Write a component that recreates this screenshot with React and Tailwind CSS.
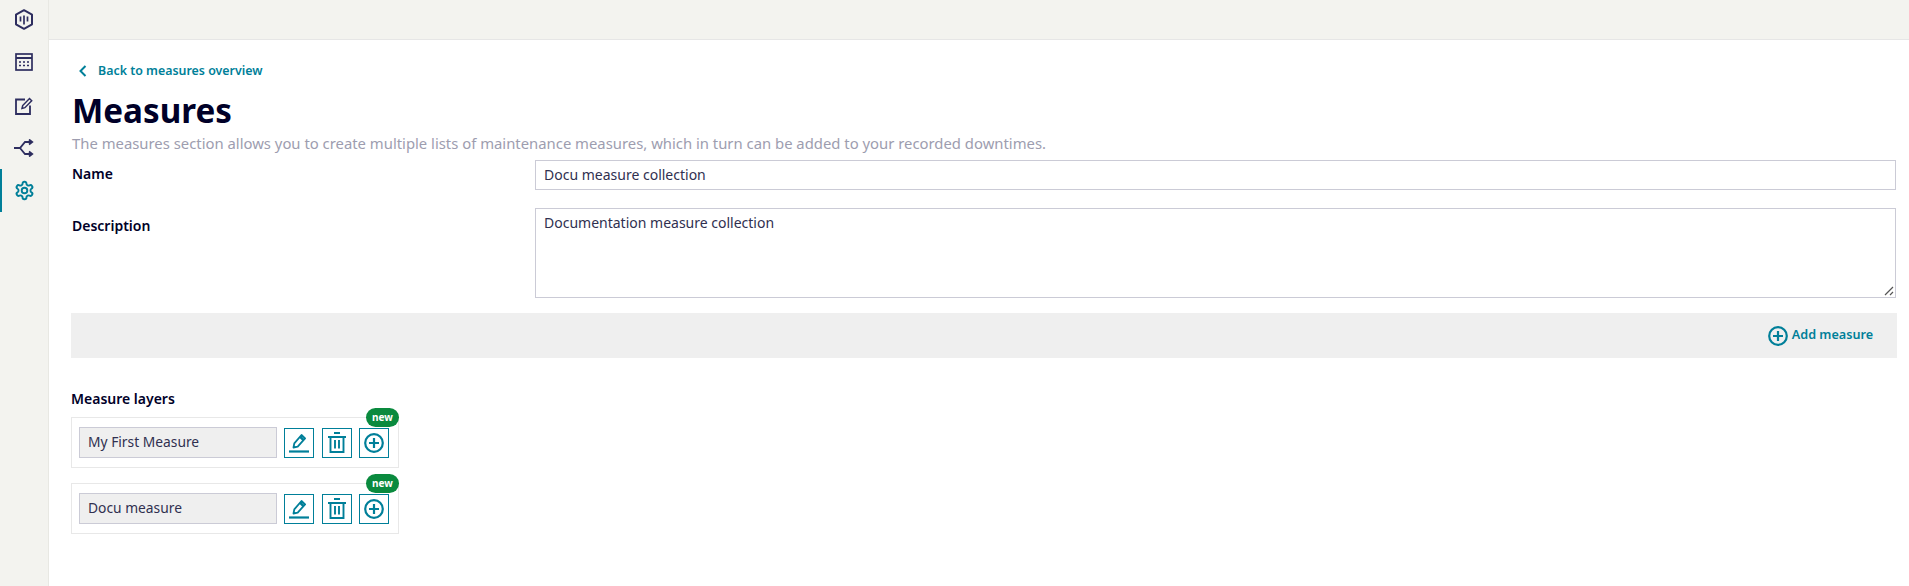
import React from "react";

const F = { fontFamily: '"Noto Sans", "Open Sans", sans-serif' };

function Hex() {
  return (
    <svg width="18" height="21" viewBox="0 0 18 21" fill="none" stroke="#2d2d5f" strokeWidth="2">
      <path d="M9 1.2 17 5.7v9.6l-8 4.5-8-4.5V5.7z" strokeLinejoin="round" />
      <path d="M5.5 7.5v5M9 6.5v9M12.5 7.5v5" strokeWidth="1.7" />
    </svg>
  );
}
function Cal() {
  return (
    <svg width="18" height="18" viewBox="0 0 18 18" fill="none" stroke="#2d2d5f" strokeWidth="1.7">
      <rect x="1" y="1" width="16" height="16" />
      <path d="M1 5h16" strokeWidth="2" />
      <path d="M4 9h2M8 9h2M12 9h2M4 12.5h2M8 12.5h2M12 12.5h2" strokeWidth="1.6" />
    </svg>
  );
}
function Note() {
  return (
    <svg width="19" height="19" viewBox="0 0 19 19" fill="none" stroke="#2d2d5f" strokeWidth="1.8">
      <path d="M10 3.5H1v14.5h14V9.5" />
      <path d="M7 12.5l.7-3 6.8-7 2.2 2.2-6.8 7z" strokeWidth="1.5" />
    </svg>
  );
}
function Branch() {
  return (
    <svg width="20" height="18" viewBox="0 0 20 18" fill="none" stroke="#2d2d5f" strokeWidth="1.8">
      <path d="M0 9h6l5-6h7M6 9l5 6h7" />
      <path d="M15 0.5 18.2 3 15 5.5M15 12.5l3.2 2.5-3.2 2.5" />
    </svg>
  );
}
function Gear() {
  return (
    <svg width="21" height="21" viewBox="0 0 24 24" fill="none" stroke="#007f99" strokeWidth="2.2" strokeLinejoin="round">
      <path d="M12.22 2h-.44a2 2 0 0 0-2 2v.18a2 2 0 0 1-1 1.73l-.43.25a2 2 0 0 1-2 0l-.15-.08a2 2 0 0 0-2.73.73l-.22.38a2 2 0 0 0 .73 2.73l.15.1a2 2 0 0 1 1 1.72v.51a2 2 0 0 1-1 1.74l-.15.09a2 2 0 0 0-.73 2.73l.22.38a2 2 0 0 0 2.73.73l.15-.08a2 2 0 0 1 2 0l.43.25a2 2 0 0 1 1 1.73V20a2 2 0 0 0 2 2h.44a2 2 0 0 0 2-2v-.18a2 2 0 0 1 1-1.73l.43-.25a2 2 0 0 1 2 0l.15.08a2 2 0 0 0 2.73-.73l.22-.39a2 2 0 0 0-.73-2.73l-.15-.08a2 2 0 0 1-1-1.74v-.5a2 2 0 0 1 1-1.74l.15-.09a2 2 0 0 0 .73-2.73l-.22-.38a2 2 0 0 0-2.73-.73l-.15.08a2 2 0 0 1-2 0l-.43-.25a2 2 0 0 1-1-1.73V4a2 2 0 0 0-2-2z" />
      <circle cx="12" cy="12" r="3.2" />
    </svg>
  );
}
function Plus({ size = 20 }) {
  return (
    <svg width={size} height={size} viewBox="0 0 20 20" fill="none" stroke="#007f99" strokeWidth="2.2">
      <circle cx="10" cy="10" r="8.8" />
      <path d="M10 5v10M5 10h10" />
    </svg>
  );
}
function Pen() {
  return (
    <svg width="20" height="21" viewBox="0 0 20 21" fill="none" stroke="#007f99" strokeWidth="1.8">
      <path d="M4.5 15.5l.8-4.2L12.5 3l3.6 3.4-7.4 8.2z" strokeLinejoin="round" />
      <path d="M11 4.5l3.6 3.6" strokeWidth="2.6" />
      <path d="M0 19.5h20" strokeWidth="2.2" />
    </svg>
  );
}
function Trash() {
  return (
    <svg width="18" height="21" viewBox="0 0 18 21" fill="none" stroke="#007f99" strokeWidth="1.9">
      <path d="M0 5h18M6 1h6" />
      <path d="M2.5 5v15h13V5" />
      <path d="M7 8v8.5M11 8v8.5" />
    </svg>
  );
}

function IconBtn({ children, className = "" }) {
  return (
    <div className={"w-[30px] h-[30px] border border-[#007f99] flex items-center justify-center shrink-0 " + className}>
      {children}
    </div>
  );
}

function Layer({ name }) {
  return (
    <div className="relative w-[328px] h-[51px] border border-[#e8e8e8] pl-[7px] flex items-center">
      <div className="w-[198px] h-[31px] bg-[#efefef] border border-[#cbcbd6] pl-[8px] flex items-center text-[13.8px] text-[#303050] mr-[7px]">
        {name}
      </div>
      <IconBtn className="mr-[8px]"><Pen /></IconBtn>
      <IconBtn className="mr-[7px]"><Trash /></IconBtn>
      <IconBtn><Plus size={20} /></IconBtn>
      <div className="absolute right-[-1px] top-[-10px] w-[33px] h-[19px] rounded-full bg-[#0a8a3e] text-white text-[10px] font-bold flex items-center justify-center">
        new
      </div>
    </div>
  );
}

export default function App() {
  return (
    <div style={F} className="flex h-[586px] w-[1909px] overflow-hidden bg-white text-[#000028]">
      <aside className="w-[49px] shrink-0 bg-[#f3f3ef] border-r border-[#e8e8e3] flex flex-col">
        <div className="h-[38px] flex items-center justify-center pr-[1px]"><Hex /></div>
        <div className="h-[44px] mt-[2px] flex items-center justify-center"><Cal /></div>
        <div className="h-[43px] flex items-center justify-center"><Note /></div>
        <div className="h-[42px] flex items-center justify-center"><Branch /></div>
        <div className="h-[43px] flex items-center justify-center border-l-2 border-[#007f99] pr-[2px]"><Gear /></div>
      </aside>
      <main className="flex-1 min-w-0 flex flex-col">
        <div className="h-[40px] shrink-0 bg-[#f3f3ef] border-b border-[#e6e6e6]" />
        <div className="pl-[23px] pr-[12px]">
          <div className="h-[18px] mt-[22px] flex items-center text-[#007f99] text-[12.4px] font-semibold">
            <svg className="ml-[5px] mr-[9px]" width="12" height="14" viewBox="0 0 12 14" fill="none" stroke="#007f99" strokeWidth="2">
              <path d="M8.5 2 3.5 7l5 5" />
            </svg>
            Back to measures overview
          </div>
          <h1 className="text-[33.2px] leading-[43px] font-bold mt-[9px]">Measures</h1>
          <p className="text-[14.85px] leading-[20px] text-[#9d9daf] mt-[1px]">
            The measures section allows you to create multiple lists of maintenance measures, which in turn can be added to your recorded downtimes.
          </p>
          <div className="flex mt-[7px]">
            <label className="w-[463px] text-[14px] font-semibold leading-[20px] mt-[4px]">Name</label>
            <div className="w-[1361px] h-[30px] border border-[#cbcbd6] pl-[8px] pb-[2px] flex items-center text-[14px] text-[#303050]">
              Docu measure collection
            </div>
          </div>
          <div className="flex mt-[18px]">
            <label className="w-[463px] text-[14px] font-semibold leading-[20px] mt-[8px]">Description</label>
            <div className="relative w-[1361px] h-[90px] border border-[#cbcbd6] pl-[8px] pt-[4px] text-[14px] leading-[20px] text-[#303050]">
              Documentation measure collection
              <svg className="absolute right-[1px] bottom-[1px]" width="10" height="10" viewBox="0 0 10 10" stroke="#555" strokeWidth="1.2">
                <path d="M1 9 9 1M6 9l3-3" />
              </svg>
            </div>
          </div>
          <div className="mt-[15px] w-[1826px] -ml-[1px] h-[45px] bg-[#efefef] flex items-center justify-end pr-[24px] text-[#007f99] text-[12.6px] font-semibold">
            <span className="mr-[4px] flex"><Plus /></span>
            Add measure
          </div>
          <div className="mt-[31px] text-[14px] font-semibold leading-[20px] -ml-[1px]">Measure layers</div>
          <div className="mt-[8px] -ml-[1px] flex flex-col gap-[15px]">
            <Layer name="My First Measure" />
            <Layer name="Docu measure" />
          </div>
        </div>
      </main>
    </div>
  );
}
